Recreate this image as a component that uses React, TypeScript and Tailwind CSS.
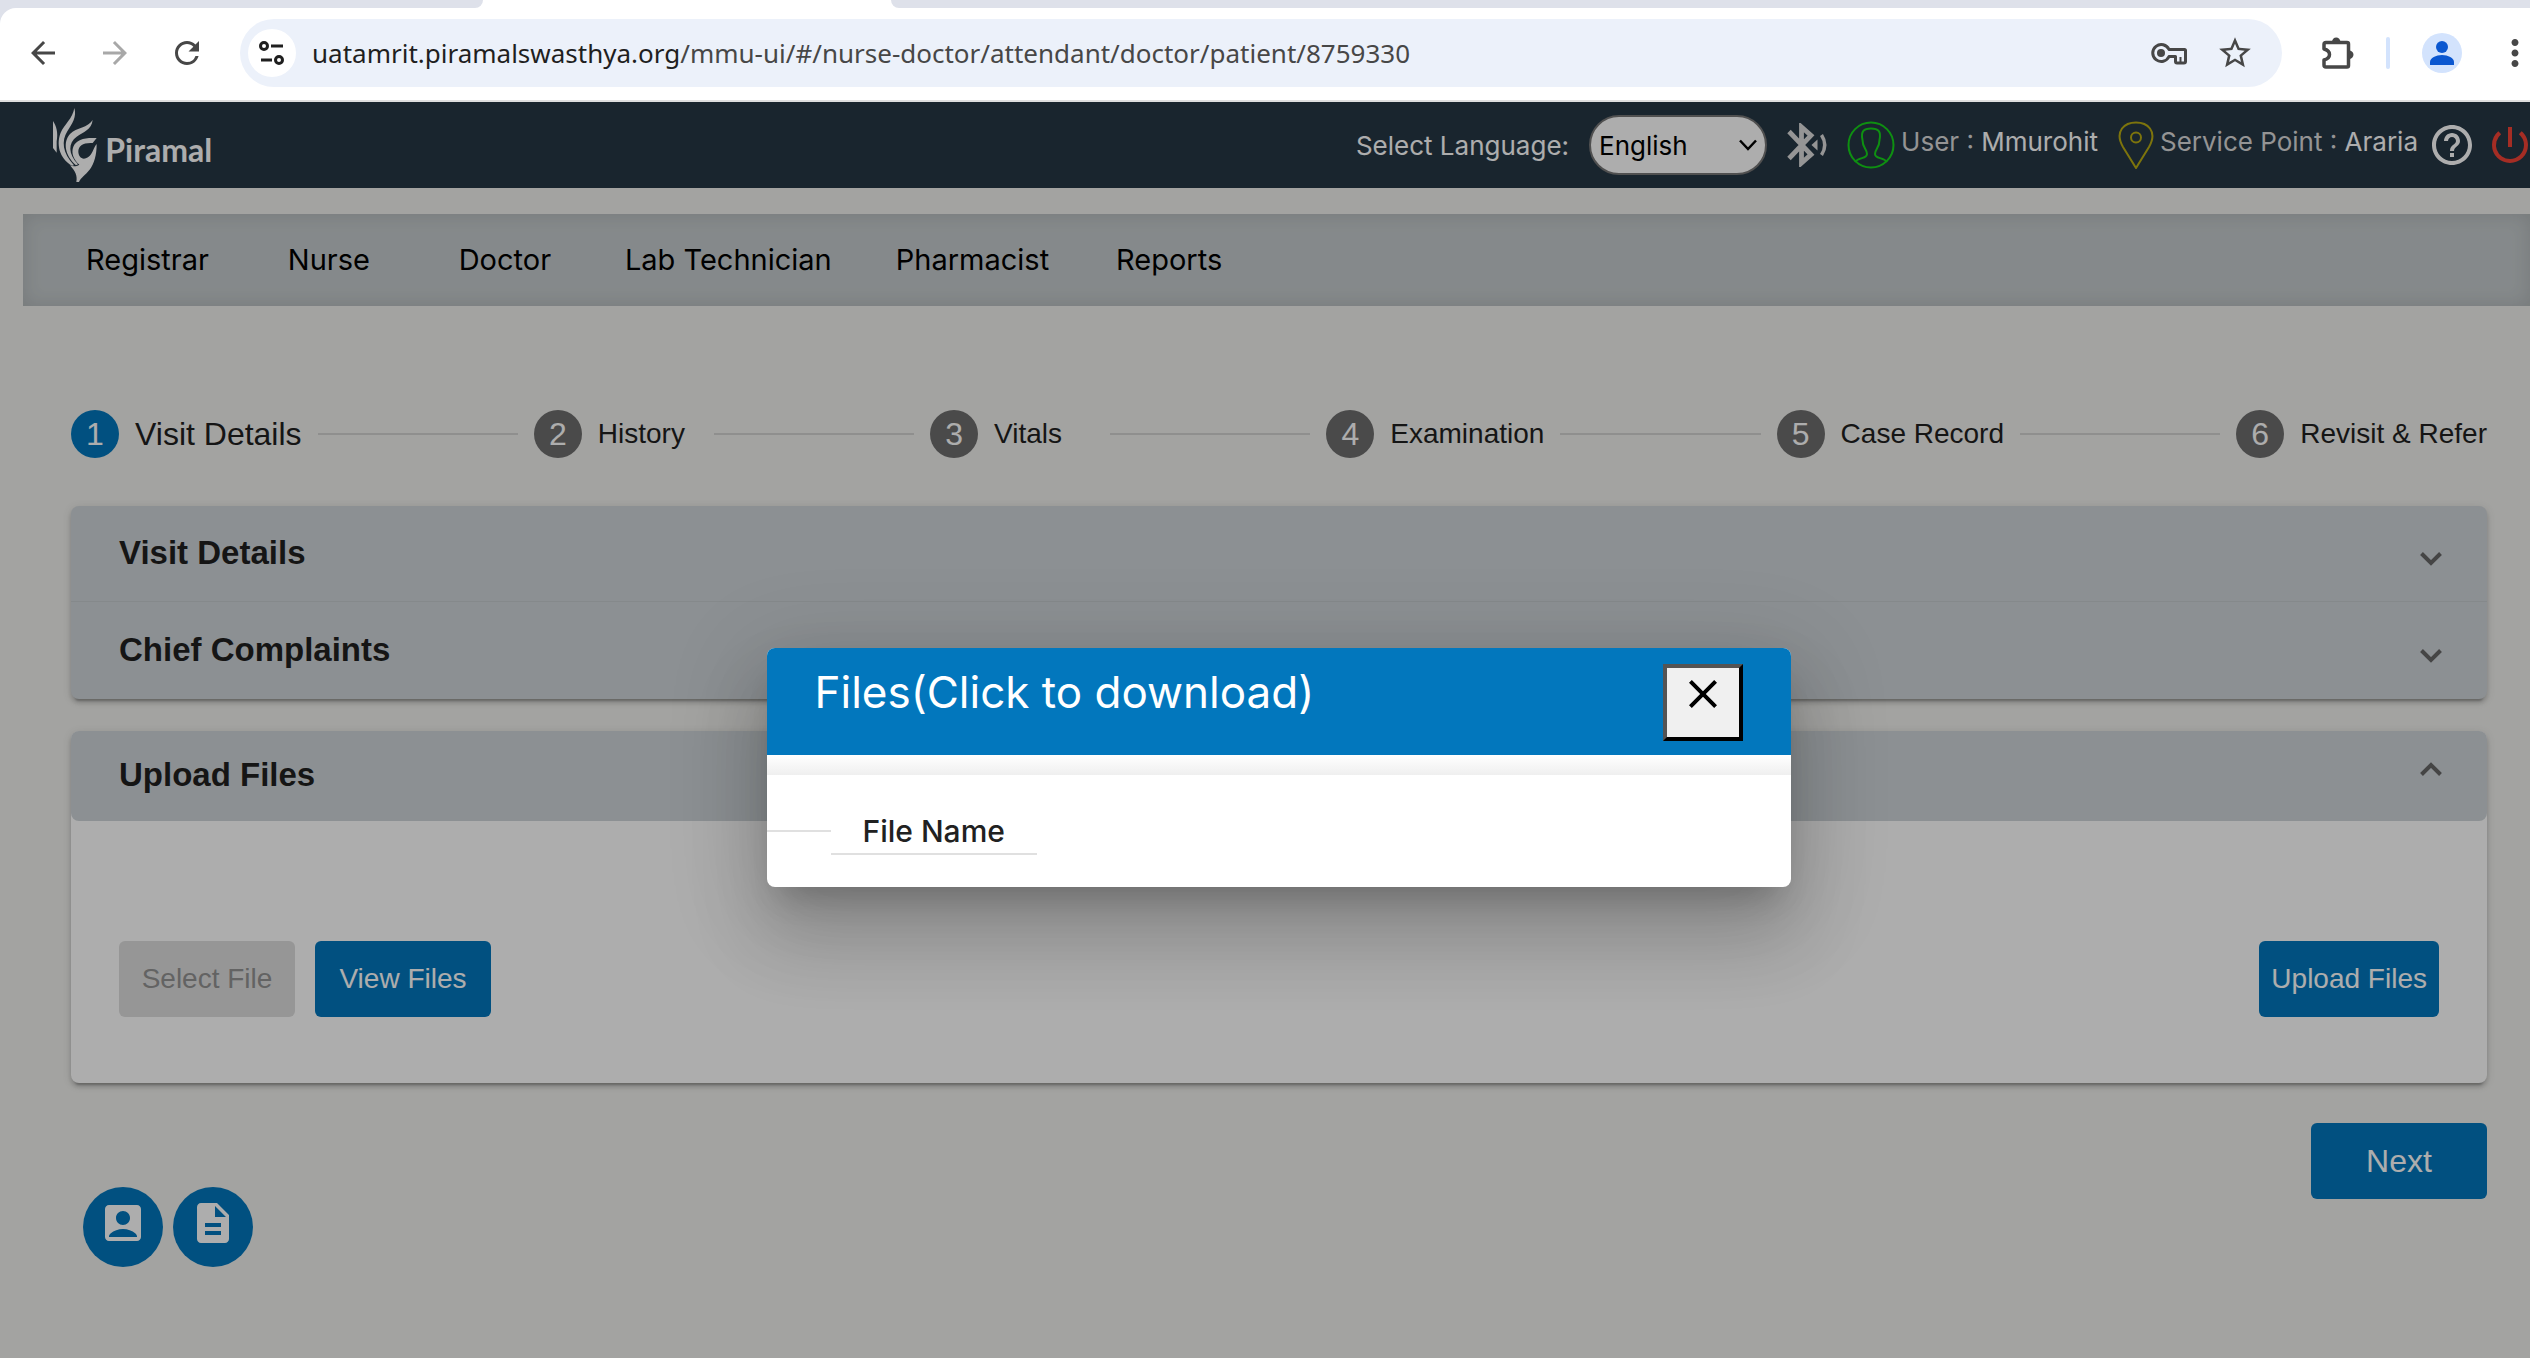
import { useState } from "react";
import {
  MdAccountBox,
  MdArrowBack,
  MdArrowForward,
  MdClose,
  MdDescription,
  MdHelpOutline,
  MdMoreVert,
  MdPowerSettingsNew,
  MdRefresh,
  MdStarOutline,
} from "react-icons/md";

const navItems = ["Registrar", "Nurse", "Doctor", "Lab Technician", "Pharmacist", "Reports"];

const steps = ["Visit Details", "History", "Vitals", "Examination", "Case Record", "Revisit & Refer"];

const cardShadow =
  "rounded-lg shadow-[0_6px_2px_-4px_rgba(0,0,0,0.2),0_4px_4px_0_rgba(0,0,0,0.14),0_2px_10px_0_rgba(0,0,0,0.12)]";

const primaryButton = "min-w-[176px] h-[76px] px-3 rounded-md bg-[#0277bd] text-white";

const TuneIcon = () => (
  <svg width="26" height="26" viewBox="0 0 26 26" fill="none" stroke="#1f1f1f" strokeWidth="3">
    <circle cx="5" cy="6" r="3.5" />
    <path d="M12 6h12M2 20h11" />
    <circle cx="20" cy="20" r="3.5" />
  </svg>
);

const KeyIcon = () => (
  <svg width="38" height="24" viewBox="0 0 38 24" fill="none" stroke="#474747" strokeWidth="3">
    <path
      d="M19 8.500 A8.500 8.500 0 1 0 19 15.500 H25.500 V20.500 Q25.500 22 27 22 H34 Q35.500 22 35.500 20.500 V9.500 Q35.500 8.500 34.500 8.500 Z"
      strokeLinejoin="round"
    />
    <circle cx="11" cy="12" r="4" fill="#474747" stroke="none" />
    <path d="M30.500 22v-6" strokeWidth="2" />
  </svg>
);

const PuzzleIcon = () => (
  <svg width="32" height="34" viewBox="0 0 32 34" fill="none">
    <path
      d="M4 6.500H25Q26.500 6.500 26.500 8V29.500Q26.500 31 25 31H4Q2 31 2 29V24C6 23 7.500 21 7.500 18.500C7.500 16 6 14 2 13V8.500Q2 6.500 4 6.500Z"
      stroke="#474747"
      strokeWidth="3.500"
      strokeLinejoin="round"
    />
    <path d="M10 6a4.200 4.500 0 0 1 8.400 0zM27 14.500a4.500 4.200 0 0 1 0 8.400z" fill="#474747" />
  </svg>
);

const PiramalLogo = () => (
  <svg width="160" height="74" viewBox="27 18 480 222" fill="#fff">
    <path d="M27 57C37 72 43 92 38 118L38 152L27 138Z" />
    <path d="M91 18C99 44 84 66 70 88C52 117 55 152 90 190L84 191C44 168 37 124 50 92C60 68 86 50 91 18Z" />
    <path d="M146 54C142 84 118 90 98 104C72 123 72 155 102 187L96 190C60 158 58 118 78 96C98 76 132 78 146 54Z" />
    <path d="M158 108L146 123C118 121 103 132 103 148C103 166 116 176 132 166C146 157 148 137 158 126C158 160 150 184 138 202C124 220 110 228 105 240H97C101 222 94 208 78 190C88 194 96 194 106 188C88 172 81 152 88 134C97 112 122 106 158 108Z" />
    <text x="184" y="180" fontFamily="Lato, sans-serif" fontWeight="700" fontSize="96">
      Piramal
    </text>
  </svg>
);

const BluetoothIcon = () => (
  <svg width="40" height="44" viewBox="0 0 40 44" fill="none" stroke="#dcdcdc">
    <path d="M2 8.500L24 31.500L14.500 40V4L24 12.500L2 35.500" strokeWidth="4.800" strokeLinejoin="miter" />
    <path d="M24.500 22l6-5.500v11z" fill="#dcdcdc" stroke="none" />
    <path d="M34.500 12q6.500 10 0 20" strokeWidth="3.500" />
  </svg>
);

const UserIcon = () => (
  <svg width="48" height="48" viewBox="0 0 48 48" fill="none" stroke="#16d41a" strokeWidth="2">
    <circle cx="24" cy="24" r="22.500" />
    <path d="M8 41C12 36 20 38 20 33C20 28 15.500 27 15.500 19C13.500 10 17 7.500 24 7.500C31 7.500 34.500 10 32.500 19C32.500 27 28 28 28 33C28 38 36 36 40 41" />
  </svg>
);

const PinIcon = () => (
  <svg width="36" height="48" viewBox="0 0 36 48" fill="none" stroke="#b8ac12" strokeWidth="2">
    <path d="M18 47L5 26C1 19 0 13 4 7.500C10 -0.500 26 -0.500 32 7.500C36 13 35 19 31 26Z" />
    <circle cx="18" cy="16.500" r="5" />
  </svg>
);

const Chevron = ({ open }: { open?: boolean }) => (
  <svg
    className={open ? "rotate-180" : ""}
    width="24"
    height="26"
    viewBox="0 0 24 26"
    fill="none"
    stroke="#666"
    strokeWidth="4"
  >
    <path d="M2.500 13.500L12 23L21.500 13.500" />
  </svg>
);

const BrowserBar = () => {
  return (
    <div className="bg-[#dee1ea]">
      <div className="flex h-2 bg-white">
        <div className="w-[483px] bg-[#dee1ea] rounded-br-lg" />
        <div className="w-[408px]" />
        <div className="flex-1 bg-[#dee1ea] rounded-bl-lg" />
      </div>
      <div className="flex items-center h-[94px] pl-[25px] pb-0.5 bg-white rounded-tl-2xl border-b-2 border-[#dedede] text-[#474747] overflow-hidden">
        <div className="flex gap-9 mr-[35px] text-[36px]">
          <button aria-label="Back"><MdArrowBack /></button>
          <button aria-label="Forward" className="text-[#a8a8a8]"><MdArrowForward /></button>
          <button aria-label="Reload"><MdRefresh /></button>
        </div>
        <div className="flex flex-1 items-center h-[68px] pl-2 pr-7 rounded-full bg-[#ecf1fa]">
          <button aria-label="Site information" className="flex items-center justify-center size-12 rounded-full bg-white">
            <TuneIcon />
          </button>
          <p className="flex-1 pl-4 text-[26px] text-[#474747] font-['Noto_Sans',sans-serif]">
            <span className="text-[#1f1f1f]">uatamrit.piramalswasthya.org</span>
            /mmu-ui/#/nurse-doctor/attendant/doctor/patient/8759330
          </p>
          <div className="flex items-center gap-7">
            <KeyIcon />
            <MdStarOutline className="text-[38px]" />
          </div>
        </div>
        <div className="flex items-center gap-8 ml-10 -mr-1.5">
          <PuzzleIcon />
          <div className="w-1 h-8 rounded-full bg-[#d3e3fd]" />
          <div className="flex items-center justify-center size-10 rounded-full bg-[#d3e3fd]">
            <svg width="24" height="24" viewBox="0 0 24 24" fill="#0b57d0">
              <circle cx="12" cy="6" r="6" />
              <path d="M0 24v-3c0-4 6-7 12-7s12 3 12 7v3z" />
            </svg>
          </div>
          <MdMoreVert className="text-[42px]" />
        </div>
      </div>
    </div>
  );
};

const Header = () => {
  return (
    <header className="flex items-center justify-between h-[86px] pl-[53px] bg-[#263745] text-[26px] text-white overflow-hidden">
      <PiramalLogo />
      <div className="flex items-center gap-5">
        <label htmlFor="language">Select Language:</label>
        <div className="relative">
          <select
            id="language"
            className="block w-[178px] h-[60px] pl-2 rounded-full border-2 border-[#767676] bg-white text-black appearance-none"
          >
            <option>English</option>
          </select>
          <svg className="absolute right-2.5 top-6" width="18" height="12" viewBox="0 0 18 12" fill="none" stroke="#000" strokeWidth="2.500">
            <path d="M1 1.500L9 10L17 1.500" />
          </svg>
        </div>
        <BluetoothIcon />
        <div className="flex items-center gap-1.5">
          <UserIcon />
          <p className="pb-2 text-[#dadada]">
            User : <span className="text-white">Mmurohit</span>
          </p>
        </div>
        <div className="flex items-center gap-1.5">
          <PinIcon />
          <p className="pb-2 text-[#dadada]">
            Service Point : <span className="text-white">Araria</span>
          </p>
        </div>
        <div className="flex gap-2.5 -ml-2.5 -mr-1 text-[48px]">
          <button aria-label="Help"><MdHelpOutline /></button>
          <button aria-label="Log out" className="text-[#f44336]"><MdPowerSettingsNew /></button>
        </div>
      </div>
    </header>
  );
};

const Stepper = () => {
  return (
    <ol className="flex items-center gap-4 text-[28px]">
      {steps.map((step, i) => (
        <li key={step} className="contents">
          <span
            className={
              i === 0
                ? "flex items-center justify-center size-12 rounded-full bg-[#0277bd] text-[32px] text-white"
                : "flex items-center justify-center size-12 rounded-full bg-[#6d6d6d] text-[32px] text-white"
            }
          >
            {i + 1}
          </span>
          <span className={i === 0 ? "text-[32px] whitespace-nowrap" : "min-w-[100px] whitespace-nowrap"}>{step}</span>
          {i < steps.length - 1 && <span className="flex-1 h-0.5 bg-[#d3d3d1]" />}
        </li>
      ))}
    </ol>
  );
};

const FilesDialog = ({ onClose }: { onClose: () => void }) => {
  return (
    <div className="absolute inset-0 flex items-center justify-center pt-[75px] pl-[27px] bg-black/32">
      <div
        role="dialog"
        aria-label="Files"
        className="w-[1024px] pb-8 rounded-lg bg-white overflow-hidden shadow-[0_22px_30px_-14px_rgba(0,0,0,0.2),0_48px_76px_6px_rgba(0,0,0,0.14),0_18px_92px_16px_rgba(0,0,0,0.12)]"
      >
        <div className="flex justify-between items-start h-[107px] px-12 pt-3 bg-[#0277bd]">
          <h2 className="text-[44px] leading-[64px] text-white">Files(Click to download)</h2>
          <button
            aria-label="Close"
            onClick={onClose}
            className="flex items-start justify-center w-20 h-[77px] mt-1 pt-0.5 border-4 border-black [border-style:outset] bg-[#f0f0f0] text-[48px] text-black"
          >
            <MdClose />
          </button>
        </div>
        <div className="h-5 bg-linear-to-b from-white to-[#efefef]" />
        <table className="text-[30px] leading-[40px] text-[#212121]">
          <thead>
            <tr>
              <th className="w-16 p-0 align-top">
                <div className="h-[57px] border-b-2 border-[#e0e0e0]" />
              </th>
              <th className="px-8 pt-9 pb-0.5 font-medium border-b-2 border-[#e0e0e0]">File Name</th>
            </tr>
          </thead>
        </table>
      </div>
    </div>
  );
};

const App = () => {
  const [showFiles, setShowFiles] = useState(true);

  return (
    <div className="flex flex-col min-h-screen font-['Inter',sans-serif]">
      <BrowserBar />
      <div className="relative flex-1 bg-[#f0f0ed] overflow-hidden">
        <Header />
        <nav className="flex items-center h-[92px] mt-[26px] ml-[23px] pl-[31px] bg-[#c5cbcd] text-[29px] text-black shadow-[inset_0_0_20px_rgba(0,0,0,0.12)]">
          {navItems.map((item) => (
            <button key={item} className="min-w-[176px] px-8">
              {item}
            </button>
          ))}
        </nav>

        <main className="pt-[104px] pl-[71px] pr-[43px] text-[#1f1f1f] font-['Liberation_Sans',sans-serif]">
          <Stepper />

          <div className={`mt-12 bg-[#cfd5d9] text-[33px] font-bold ${cardShadow}`}>
            <button className="flex items-center justify-between w-full h-24 pl-12 pr-11 pb-0.5 border-b border-black/5">
              Visit Details <Chevron />
            </button>
            <button className="flex items-center justify-between w-full h-[97px] pl-12 pr-11 pb-0.5">
              Chief Complaints <Chevron />
            </button>
          </div>

          <div className={`mt-8 bg-white text-[28px] ${cardShadow}`}>
            <button className="flex items-center justify-between w-full h-[90px] pl-12 pr-11 pb-0.5 rounded-lg bg-[#cfd5d9] text-[33px] font-bold">
              Upload Files <Chevron open />
            </button>
            <div className="flex gap-5 px-12 pt-[120px] pb-[66px]">
              <button disabled className="min-w-[176px] h-[76px] px-3 rounded-md bg-[#dedede] text-[#929292]">
                Select File
              </button>
              <button className={primaryButton} onClick={() => setShowFiles(true)}>
                View Files
              </button>
              <button className={`ml-auto ${primaryButton}`}>Upload Files</button>
            </div>
          </div>

          <div className="flex items-start justify-between mt-10">
            <div className="flex gap-2.5 pt-16 pl-3 text-[48px] text-white">
              <button aria-label="Patient record" className="flex justify-center size-20 pt-3 rounded-full bg-[#0277bd]">
                <MdAccountBox />
              </button>
              <button aria-label="Case sheet" className="flex justify-center size-20 pt-3 rounded-full bg-[#0277bd]">
                <MdDescription />
              </button>
            </div>
            <button className={`text-[32px] ${primaryButton}`}>Next</button>
          </div>
        </main>

        {showFiles && <FilesDialog onClose={() => setShowFiles(false)} />}
      </div>
    </div>
  );
};

export default App;
